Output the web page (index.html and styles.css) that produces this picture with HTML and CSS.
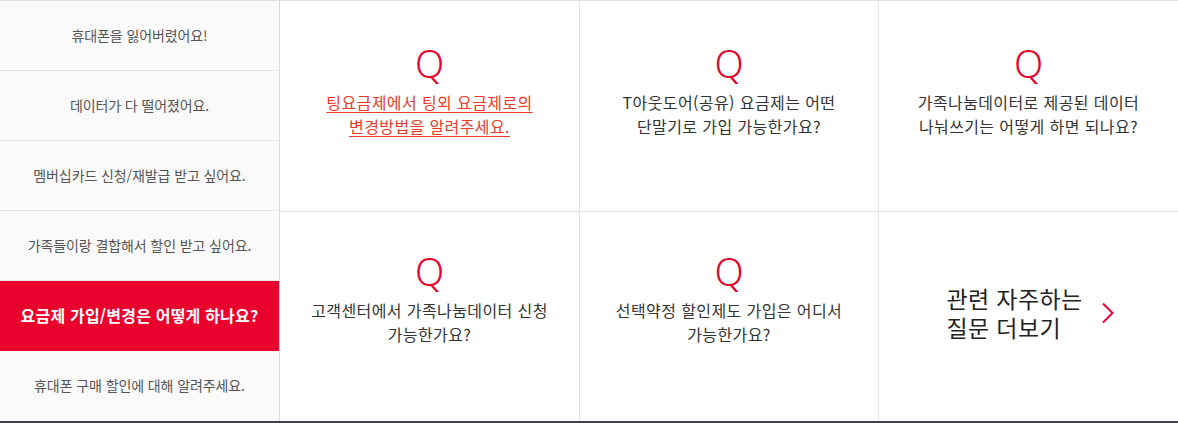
FILE: index.html
```html
<!DOCTYPE html>
<html lang="ko">
<head>
<meta charset="utf-8">
<link rel="stylesheet" href="styles.css">
</head>
<body>
<div class="faq">
  <ul class="topics">
    <li class="topic">휴대폰을 잃어버렸어요!</li>
    <li class="topic">데이터가 다 떨어졌어요.</li>
    <li class="topic">멤버십카드 신청/재발급 받고 싶어요.</li>
    <li class="topic">가족들이랑 결합해서 할인 받고 싶어요.</li>
    <li class="topic active">요금제 가입/변경은 어떻게 하나요?</li>
    <li class="topic">휴대폰 구매 할인에 대해 알려주세요.</li>
  </ul>
  <div class="cards">
    <div class="card">
      <span class="q">Q</span>
      <a class="ask link">팅요금제에서 팅외 요금제로의<br>변경방법을 알려주세요.</a>
    </div>
    <div class="card">
      <span class="q">Q</span>
      <span class="ask">T아웃도어(공유) 요금제는 어떤<br>단말기로 가입 가능한가요?</span>
    </div>
    <div class="card">
      <span class="q">Q</span>
      <span class="ask">가족나눔데이터로 제공된 데이터<br>나눠쓰기는 어떻게 하면 되나요?</span>
    </div>
    <div class="card low">
      <span class="q">Q</span>
      <span class="ask">고객센터에서 가족나눔데이터 신청<br>가능한가요?</span>
    </div>
    <div class="card low">
      <span class="q">Q</span>
      <span class="ask">선택약정 할인제도 가입은 어디서<br>가능한가요?</span>
    </div>
    <div class="card more">
      <span class="more-text">관련 자주하는<br>질문 더보기</span>
      <svg class="arrow" width="14" height="22" viewBox="0 0 14 22"><path d="M2 1.5 L11.5 11 L2 20.5" fill="none" stroke="#ea002c" stroke-width="2"/></svg>
    </div>
  </div>
</div>
</body>
</html>
```

FILE: styles.css
```css
* { box-sizing: border-box; }
html, body { margin: 0; padding: 0; background: #fff; }
body { font-family: "Noto Sans CJK KR", "Noto Sans", sans-serif; }

.faq {
  display: flex;
  width: 1178px;
  border-top: 1px solid #e2e2e2;
  border-bottom: 2px solid #3e3e50;
}

.topics {
  list-style: none;
  margin: 0;
  padding: 0;
  width: 280px;
  flex: none;
  background: #fafafa;
  border-right: 1px solid #dcdcdc;
}
.topic {
  height: 70px;
  display: flex;
  align-items: center;
  justify-content: center;
  padding-bottom: 2px;
  font-size: 14px;
  color: #555;
  border-bottom: 1px solid #e6e6e6;
  letter-spacing: -0.1px;
}
.topic:last-child { border-bottom: none; }
.topic.active {
  background: #ea002c;
  color: #fff;
  font-weight: 700;
  font-size: 16px;
  letter-spacing: 0.2px;
  border-bottom-color: #ea002c;
}

.cards {
  flex: 1;
  display: grid;
  grid-template-columns: 300px 299px 299px;
  grid-template-rows: 211px 209px;
}
.card {
  display: flex;
  flex-direction: column;
  align-items: center;
  padding-top: 36px;
  border-right: 1px solid #e6e6e6;
  border-bottom: 1px solid #e6e6e6;
  text-align: center;
}
.card:nth-child(3n) { border-right: none; }
.card.low { border-bottom: none; padding-top: 33px; }
.q {
  font-family: "Noto Sans", sans-serif;
  font-weight: 300;
  font-size: 38px;
  line-height: 53px;
  color: #ea002c;
}
.ask {
  font-size: 16px;
  line-height: 24px;
  color: #333;
  letter-spacing: 0.4px;
}
.ask.link {
  color: #ea3b28;
  text-decoration: underline;
  text-underline-offset: 3px;
}
.card.more {
  flex-direction: row;
  justify-content: center;
  align-items: center;
  padding-top: 0;
  padding-bottom: 7px;
  border-bottom: none;
  gap: 18px;
}
.more-text {
  font-size: 23px;
  line-height: 29px;
  letter-spacing: 0.4px;
  color: #222;
  text-align: left;
  margin-left: 4px;
}
```
